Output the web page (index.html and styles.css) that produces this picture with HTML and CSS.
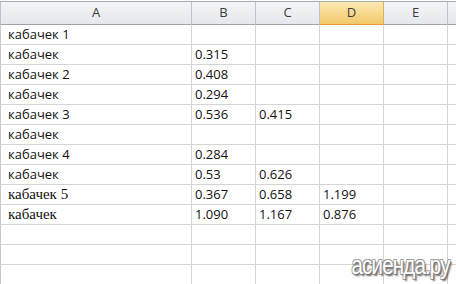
FILE: index.html
```html
<!DOCTYPE html>
<html>
<head>
<meta charset="utf-8">
<link rel="stylesheet" href="styles.css">
</head>
<body>
<div class="sheet">
  <div class="row head">
    <div class="c a">A</div><div class="c">B</div><div class="c">C</div><div class="c sel">D</div><div class="c">E</div><div class="c f"></div>
  </div>
  <div class="row"><div class="c a">кабачек 1</div><div class="c"></div><div class="c"></div><div class="c"></div><div class="c"></div><div class="c f"></div></div>
  <div class="row"><div class="c a">кабачек</div><div class="c">0.315</div><div class="c"></div><div class="c"></div><div class="c"></div><div class="c f"></div></div>
  <div class="row"><div class="c a">кабачек 2</div><div class="c">0.408</div><div class="c"></div><div class="c"></div><div class="c"></div><div class="c f"></div></div>
  <div class="row"><div class="c a">кабачек</div><div class="c">0.294</div><div class="c"></div><div class="c"></div><div class="c"></div><div class="c f"></div></div>
  <div class="row"><div class="c a">кабачек 3</div><div class="c">0.536</div><div class="c">0.415</div><div class="c"></div><div class="c"></div><div class="c f"></div></div>
  <div class="row"><div class="c a">кабачек</div><div class="c"></div><div class="c"></div><div class="c"></div><div class="c"></div><div class="c f"></div></div>
  <div class="row"><div class="c a">кабачек 4</div><div class="c">0.284</div><div class="c"></div><div class="c"></div><div class="c"></div><div class="c f"></div></div>
  <div class="row"><div class="c a">кабачек</div><div class="c">0.53</div><div class="c">0.626</div><div class="c"></div><div class="c"></div><div class="c f"></div></div>
  <div class="row"><div class="c a serif">кабачек 5</div><div class="c">0.367</div><div class="c">0.658</div><div class="c">1.199</div><div class="c"></div><div class="c f"></div></div>
  <div class="row"><div class="c a serif">кабачек</div><div class="c">1.090</div><div class="c">1.167</div><div class="c">0.876</div><div class="c"></div><div class="c f"></div></div>
  <div class="row"><div class="c a"></div><div class="c"></div><div class="c"></div><div class="c"></div><div class="c"></div><div class="c f"></div></div>
  <div class="row"><div class="c a"></div><div class="c"></div><div class="c"></div><div class="c"></div><div class="c"></div><div class="c f"></div></div>
  <div class="row"><div class="c a"></div><div class="c"></div><div class="c"></div><div class="c"></div><div class="c"></div><div class="c f"></div></div>
  <div class="mark">асиенда.ру</div>
</div>
</body>
</html>
```
FILE: styles.css
```css
html, body {
  margin: 0;
  padding: 0;
  background: #ffffff;
  overflow: hidden;
}
.sheet {
  position: relative;
  width: 456px;
  height: 284px;
  overflow: hidden;
  padding-top: 1px;
  box-sizing: border-box;
  font-family: "Open Sans", "Liberation Sans", sans-serif;
  font-size: 13px;
  color: #111;
}
.row {
  display: grid;
  grid-template-columns: 192px 64px 64px 64px 64px 20px;
  height: 20px;
}
.c {
  box-sizing: border-box;
  border-right: 1px solid #d4d4d4;
  border-bottom: 1px solid #d4d4d4;
  padding: 0 0 0 3px;
  line-height: 19px;
  white-space: nowrap;
  overflow: hidden;
}
.c.a {
  padding-left: 7px;
  border-left: 1px solid #c8c8c8;
}
.serif {
  font-family: "Liberation Serif", serif;
  font-size: 15px;
}
.head {
  height: 23px;
  border-top: 1px solid #a8a8a8;
  background: linear-gradient(#f4f5f7, #e3e6eb);
}
.head .c {
  text-align: center;
  padding: 0;
  color: #3c3c3c;
  line-height: 21px;
  border-right: 1px solid #c0c4ca;
  border-bottom: 1px solid #9ea3aa;
  font-size: 13px;
}
.head .c.a { border-left: 1px solid #c0c4ca; }
.head .sel {
  background: linear-gradient(#fbe9b4, #f3c86a);
  border-bottom: 1px solid #e39b3c;
  border-right: 1px solid #d9b25a;
}
.mark {
  position: absolute;
  right: 6px;
  bottom: 4px;
  font-family: "Liberation Sans", sans-serif;
  font-size: 25px;
  letter-spacing: -1px;
  transform: scaleX(0.82);
  transform-origin: right bottom;
  color: #ffffff;
  text-shadow: 1px 1px 0 #7a7a7a, -1px -1px 0 #a0a0a0, 1px -1px 0 #a0a0a0, -1px 1px 0 #a0a0a0, 2px 2px 2px #555;
}
```
